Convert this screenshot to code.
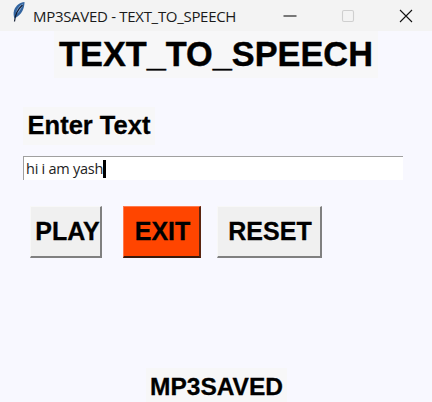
<div class="window">
  <header class="titlebar">
    <svg class="feather" viewBox="0 0 14 21" width="14" height="21" aria-hidden="true">
      <path d="M12.500 1C8 1.500 3.500 4.500 2 9.500 1.300 12 1.500 14.800 2.500 17.500 5.800 16 8.800 13.300 10.500 9.800 11.800 7 12.500 4 12.500 1z" fill="#32649f"/>
      <path d="M11.300 2.500C8.300 3.800 5.500 6.500 4.300 10.500L5.500 12.500C8 10 10 6.500 11.300 2.500z" fill="#86abd8"/>
      <path d="M2.500 20.500C3 15 5.500 8.500 10.500 4" fill="none" stroke="#121d33" stroke-width="1.200"/>
    </svg>
    <span class="app-title">MP3SAVED - TEXT_TO_SPEECH</span>
    <div class="controls">
      <svg width="16" height="16" viewBox="0 0 16 16" aria-hidden="true"><path d="M1.500 8h13" stroke="#111" stroke-width="1.100"/></svg>
      <svg width="16" height="16" viewBox="0 0 16 16" aria-hidden="true"><rect x="2.500" y="2.500" width="11" height="11" rx="1.500" fill="none" stroke="#cfcfcf" stroke-width="1.100"/></svg>
      <svg width="16" height="16" viewBox="0 0 16 16" aria-hidden="true"><path d="M2 2l12 12M14 2L2 14" stroke="#111" stroke-width="1.100"/></svg>
    </div>
  </header>

  <main class="content">
    <h1 class="heading">TEXT_TO_SPEECH</h1>
    <div class="form">
      <label class="field-label" for="speech">Enter Text</label>
      <div class="entry" id="speech"><span>hi i am yash</span><i class="caret"></i></div>
    </div>
    <div class="actions">
      <button class="play">PLAY</button>
      <button class="exit">EXIT</button>
      <button class="reset">RESET</button>
    </div>
    <footer class="footer">MP3SAVED</footer>
  </main>
</div>

<style>
  :global(body) {
    margin: 0;
    background: #f8f8ff;
  }
  .window {
    width: 432px;
    height: 402px;
    display: flex;
    flex-direction: column;
    overflow: hidden;
    background: #f8f8ff;
    font-family: "Liberation Sans", Arial, sans-serif;
    color: #000;
  }
  .titlebar {
    height: 31px;
    flex: none;
    display: flex;
    align-items: center;
    background: #f3f3f3;
    padding-left: 12px;
    box-sizing: border-box;
  }
  .feather {
    flex: none;
    margin-top: -8px;
  }
  .app-title {
    margin-left: 7px;
    font-family: "Open Sans", "Noto Sans", sans-serif;
    font-size: 15px;
    letter-spacing: -0.3px;
    color: #1a1a1a;
    white-space: nowrap;
  }
  .controls {
    margin-left: auto;
    display: flex;
    gap: 42px;
    padding-right: 18px;
    margin-top: 1px;
  }
  .content {
    flex: 1;
    display: flex;
    flex-direction: column;
    min-height: 0;
  }
  .heading {
    align-self: flex-start;
    margin: 0 0 0 54px;
    width: 324px;
    height: 47px;
    background: #f7f7f8;
    font-size: 34.300px;
    line-height: 47px;
    font-weight: 700;
    text-align: center;
    -webkit-text-stroke: 0.4px #000;
  }
  .form {
    margin: 29px 0 0 23px;
    display: flex;
    flex-direction: column;
    align-items: flex-start;
  }
  .field-label {
    width: 132px;
    height: 38px;
    background: #f7f7f8;
    font-size: 25.500px;
    line-height: 36px;
    font-weight: 700;
    text-align: center;
    -webkit-text-stroke: 0.3px #000;
  }
  .entry {
    margin-top: 11px;
    width: 380px;
    height: 24px;
    box-sizing: border-box;
    background: #fff;
    border-top: 1px solid #a0a0a0;
    border-left: 1px solid #a0a0a0;
    padding-left: 2px;
    display: flex;
    align-items: center;
    font-family: "Open Sans", "Noto Sans", sans-serif;
    font-size: 14.500px;
    letter-spacing: -0.25px;
    color: #222;
  }
  .caret {
    width: 2.500px;
    height: 18px;
    background: #000;
  }
  .actions {
    margin: 26px 0 0 30px;
    display: flex;
    align-items: flex-start;
  }
  button {
    height: 52px;
    padding: 0 0 0 2px;
    box-sizing: border-box;
    border-style: solid;
    border-width: 1px 2px 2px 1px;
    border-color: #f8f8f8 #808080 #808080 #f8f8f8;
    background: #f0f0f0;
    font-family: "Liberation Sans", Arial, sans-serif;
    font-size: 25px;
    font-weight: 700;
    color: #000;
    -webkit-text-stroke: 0.3px #000;
  }
  .play {
    width: 72px;
    padding-left: 4px;
  }
  .exit {
    width: 78px;
    margin-left: 21px;
    background: #ff4500;
    border-color: #ff7a4d #5a2410 #3a1a0c #ff7a4d;
  }
  .reset {
    width: 105px;
    margin-left: 16px;
  }
  .footer {
    align-self: flex-start;
    margin: auto 0 0 146px;
    width: 141px;
    height: 34px;
    background: #f7f7f8;
    font-size: 24.500px;
    line-height: 38px;
    font-weight: 700;
    text-align: center;
    -webkit-text-stroke: 0.3px #000;
  }
</style>
